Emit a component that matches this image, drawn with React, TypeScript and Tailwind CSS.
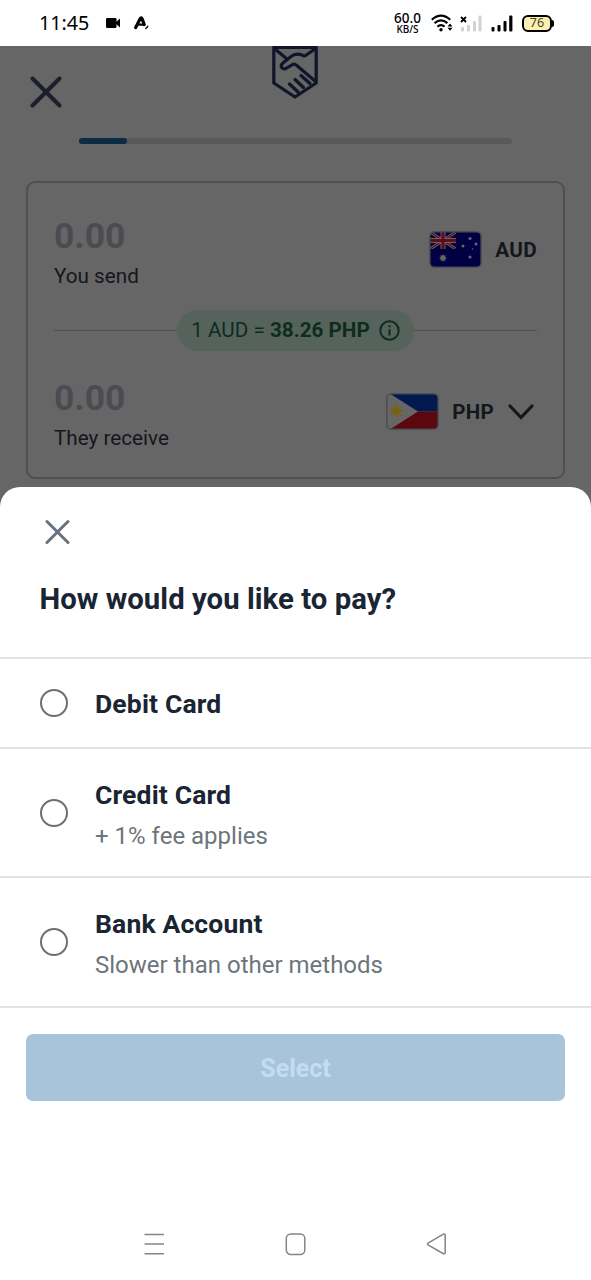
import { useState } from "react";

const PAYMENT_METHODS = [
  { id: "debit", title: "Debit Card", note: "", height: "h-[90px]" },
  { id: "credit", title: "Credit Card", note: "+ 1% fee applies", height: "h-[129px]" },
  { id: "bank", title: "Bank Account", note: "Slower than other methods", height: "h-[130px]" },
];

function StatusBar() {
  return (
    <header className="flex h-[46px] items-center justify-between bg-white pl-[39px] pr-[37px] font-['Noto_Sans',sans-serif] text-black">
      <div className="flex items-center">
        <span className="w-[67px] text-[19.7px] leading-none">11:45</span>
        <svg width="14" height="10" viewBox="0 0 14 10" fill="currentColor">
          <rect width="10.5" height="10" rx="1.2" />
          <path d="M9.5 4.5 14 .6v8.800L9.500 5.500z" />
        </svg>
        <svg className="ml-[14px]" width="15" height="14" viewBox="0 0 15 14" fill="none" stroke="currentColor">
          <path d="M1.700 11.500 6 3Q7.200 .8 8.200 3L10.200 8.600" strokeWidth="3.200" strokeLinecap="round" />
          <path d="M3.500 8.600h6.500" strokeWidth="2.200" />
          <path d="M11.300 12.800q1.900-.8 2.700-3" strokeWidth="1.300" />
        </svg>
      </div>

      <div className="flex items-center">
        <div className="flex w-[29px] flex-col items-center font-medium">
          <span className="h-[12px] text-[13.5px] leading-[12px]">60.0</span>
          <span className="h-[10px] text-[10px] leading-[10px]">KB/S</span>
        </div>
        <svg className="ml-[9px]" width="23" height="18" viewBox="0 0 23 18" fill="none" stroke="currentColor" strokeWidth="2.2">
          <path d="M.8 5.700q9.200-8.200 18.400 0M3.600 9.200q6.400-5.600 12.800 0M6.400 12.600q3.600-3 7.200 0" />
          <circle cx="10" cy="15.700" r="1.700" fill="currentColor" stroke="none" />
          <path d="m16.500 12.400 2.500-3 2.500 3zM16.500 13.800l2.500 3 2.500-3z" fill="currentColor" stroke="none" />
        </svg>
        <svg className="ml-[6px]" width="22" height="17" viewBox="0 0 22 17">
          <path d="m1 2 5 5m0-5L1 7" stroke="currentColor" strokeWidth="1.800" />
          <g fill="#d2d2d2">
            <rect x="1" y="12" width="3" height="4.500" rx="1" />
            <rect x="7" y="10" width="3" height="6.500" rx="1" />
            <rect x="13" y="6" width="3" height="10.500" rx="1" />
            <rect x="18.500" y="0.500" width="3" height="16" rx="1" />
          </g>
        </svg>
        <svg className="ml-[9px]" width="22" height="17" viewBox="0 0 22 17" fill="currentColor">
          <rect x="0.500" y="12" width="3" height="4.500" rx="1" />
          <rect x="6.500" y="10" width="3" height="6.500" rx="1" />
          <rect x="12.500" y="6" width="3" height="10.500" rx="1" />
          <rect x="18.200" y="0.500" width="3.200" height="16" rx="1" />
        </svg>
        <div className="ml-[9px] flex h-[17px] w-[30px] items-center justify-center rounded-[6px] border-2 border-black bg-[#fbf0b4] text-[12.5px] leading-none text-[#4d4214]">
          76
        </div>
        <span className="h-[7px] w-[2px] rounded-r bg-black" />
      </div>
    </header>
  );
}

function ShieldLogo() {
  return (
    <svg className="-ml-px" width="46" height="54" viewBox="0 0 46 54" fill="none" stroke="#10152a" strokeWidth="3.200" strokeLinejoin="round" strokeLinecap="round">
      <path d="M1.800 1.500h42.400v35.500L23 51 1.800 37z" />
      <path d="m3 3 12.500 10.500M43 3 33.500 9.500Q32 10.500 30 9q-6-2.500-11 1.500l-8 6.500q-2.800 2.300-1.200 4.700 1.800 2 4.700.5l6-3.500q2.200-1.200 4 .6L43 35" />
      <path d="m29 29.500 9 8M23 33.500l8.500 8M17.500 38l8.500 8" />
    </svg>
  );
}

function AustraliaFlag() {
  return (
    <svg width="53" height="37" viewBox="0 0 53 37">
      <clipPath id="au">
        <rect x="1" y="1" width="51" height="35" rx="4" />
      </clipPath>
      <clipPath id="jack">
        <rect x="1" y="1" width="26" height="17" />
      </clipPath>
      <g clipPath="url(#au)">
        <rect width="53" height="37" fill="#000042" />
        <g clipPath="url(#jack)">
          <path d="m1 1 26 17M27 1 1 18" stroke="#666" strokeWidth="3" />
          <path d="m1 1 26 17M27 1 1 18" stroke="#620b16" strokeWidth="1.200" />
          <path d="M14 0v19M0 9.500h28" stroke="#666" strokeWidth="5" />
          <path d="M14 0v19M0 9.500h28" stroke="#620b16" strokeWidth="3.200" />
        </g>
        <g fill="#666">
          <circle cx="14" cy="27" r="2.700" />
          <path d="M14 23.500v7M10.500 27h7M11.500 24.500l5 5M16.500 24.500l-5 5" stroke="#666" />
          <circle cx="41" cy="7.500" r="1.500" />
          <circle cx="34" cy="15" r="1.500" />
          <circle cx="47" cy="13" r="1.500" />
          <circle cx="41" cy="26" r="1.600" />
          <circle cx="43.500" cy="18" r="0.800" />
        </g>
      </g>
      <rect x="0.800" y="0.800" width="51.400" height="35.400" rx="4.500" fill="none" stroke="#4c4f56" strokeWidth="1.600" />
    </svg>
  );
}

function PhilippinesFlag() {
  return (
    <svg width="53" height="37" viewBox="0 0 53 37">
      <clipPath id="ph">
        <rect x="1" y="1" width="51" height="35" rx="4" />
      </clipPath>
      <g clipPath="url(#ph)">
        <rect width="53" height="18.500" fill="#001a4f" />
        <rect y="18.500" width="53" height="19" fill="#5a0710" />
        <path d="M0 0h3l29 18.500L3 37H0z" fill="#666" />
        <path d="M10.500 11v14M3.500 18h14M5.500 13l10 10M15.500 13l-10 10" stroke="#766216" strokeWidth="1.700" />
        <circle cx="10.500" cy="18" r="3.600" fill="#766216" />
      </g>
      <rect x="0.800" y="0.800" width="51.400" height="35.400" rx="4.500" fill="none" stroke="#4c4f56" strokeWidth="1.600" />
    </svg>
  );
}

function Amount({ label }: { label: string }) {
  return (
    <div>
      <div className="text-[35.5px] font-bold leading-[42px] text-[#4a4c51]">0.00</div>
      <div className="mt-[7px] text-[20.7px] leading-[25px] text-[#14171c]">{label}</div>
    </div>
  );
}

function TransferScreen() {
  return (
    <main className="h-[441px] bg-[#666]">
      <div className="grid h-[95px] grid-cols-[1fr_46px_1fr] items-start">
        <button className="ml-[30px] mt-[30px] w-8" aria-label="Close">
          <svg width="32" height="32" viewBox="0 0 32 32" stroke="#1b1f2b" strokeWidth="4" strokeLinecap="round">
            <path d="m2.500 2.500 27 27M29.500 2.500l-27 27" />
          </svg>
        </button>
        <ShieldLogo />
      </div>
      <div className="-mt-[3px] ml-[79px] h-[6px] w-[433px] rounded-full bg-[#595959]">
        <div className="h-full w-[48px] rounded-full bg-[#0c2c45]" />
      </div>

      <section className="mx-[26px] mt-[37px] h-[298px] rounded-[9px] border-2 border-[#4d4f52] px-[26px] pt-[32px]">
        <div className="flex items-start justify-between">
          <Amount label="You send" />
          <div className="mt-[16px] flex items-center">
            <AustraliaFlag />
            <span className="ml-[13px] text-[20.7px] font-bold leading-6 tracking-[0.3px] text-[#14171c]">AUD</span>
          </div>
        </div>

        <div className="mt-[21px] flex items-center">
          <span className="h-[1.5px] flex-1 bg-[#4d4f52]" />
          <div className="flex h-[41px] w-[237px] items-center justify-center rounded-full bg-[#55635c] text-[20.7px] text-[#0d2c1e]">
            <span className="whitespace-nowrap pt-px">
              1 AUD = <b className="font-bold">38.26 PHP</b>
            </span>
            <svg className="ml-[9px]" width="21" height="21" viewBox="0 0 21 21" fill="none" stroke="currentColor" strokeWidth="2">
              <circle cx="10.500" cy="10.500" r="9.200" />
              <path d="M10.500 9.300v6.200M10.500 5.200v2" />
            </svg>
          </div>
          <span className="h-[1.5px] flex-1 bg-[#4d4f52]" />
        </div>

        <div className="mt-[26px] flex items-start justify-between">
          <Amount label="They receive" />
          <div className="mt-[16px] flex items-center">
            <PhilippinesFlag />
            <span className="ml-[13px] text-[20.5px] font-bold leading-6 tracking-[0.3px] text-[#14171c]">PHP</span>
            <svg className="ml-[14px] mr-[3px]" width="26" height="16" viewBox="0 0 26 16" fill="none" stroke="#14171c" strokeWidth="3.200" strokeLinecap="round">
              <path d="m2 2 11 11.500L24 2" />
            </svg>
          </div>
        </div>
      </section>
    </main>
  );
}

function PaymentSheet() {
  const [selected, setSelected] = useState("");

  return (
    <div className="bg-[#666]">
      <section className="h-[793px] rounded-t-[20px] bg-white">
        <div className="h-[170px] pl-[39.5px] pt-[32px]">
          <button className="block pl-[5px]" aria-label="Close payment options">
            <svg width="25" height="26" viewBox="0 0 25 26" stroke="#66727e" strokeWidth="3" strokeLinecap="round">
              <path d="m2 2.500 21 21M23 2.500l-21 21" />
            </svg>
          </button>
          <h1 className="mt-[36px] text-[29.3px] font-bold leading-[36px] tracking-[0.05px] text-[#1a2533]">How would you like to pay?</h1>
        </div>

        <div>
          {PAYMENT_METHODS.map((method) => (
            <button
              key={method.id}
              onClick={() => setSelected(method.id)}
              className={`flex w-full items-center border-t-2 border-[#e2e3e4] pl-[40px] text-left ${method.height}`}
            >
              <span className="flex h-[28px] w-[28px] items-center justify-center rounded-full border-2 border-[#6b7075]">
                {selected === method.id && <span className="h-4 w-4 rounded-full bg-[#1c6ea4]" />}
              </span>
              <span className="ml-[27px] flex flex-col pt-[2px]">
                <span className="text-[26.5px] font-bold leading-[32px] tracking-[0.15px] text-[#1a2533]">{method.title}</span>
                {method.note && <span className="mt-[9px] -mb-[3px] text-[24px] leading-[32px] text-[#6d757c]">{method.note}</span>}
              </span>
            </button>
          ))}
        </div>

        <div className="border-t-2 border-[#e2e3e4] px-[26px] pt-[26px]">
          <button className="h-[67px] w-full rounded-[7px] bg-[#a8c4db] pt-[2px] text-[25px] font-bold text-[#c3dcf1]">Select</button>
        </div>

        <nav className="mt-[131px] flex items-center pl-[143px]">
          <svg width="22" height="24" viewBox="0 0 22 24" stroke="#858585" strokeWidth="1.500">
            <path d="M1.500 2.500h19.500M1.500 12h19.500M1.500 21.800h19.500" />
          </svg>
          <svg className="ml-[120px]" width="22" height="24" viewBox="0 0 22 24" fill="none" stroke="#858585" strokeWidth="1.500">
            <rect x="1.300" y="2" width="18.500" height="20.500" rx="4.500" />
          </svg>
          <svg className="ml-[119px]" width="22" height="24" viewBox="0 0 22 24" fill="none" stroke="#858585" strokeWidth="1.500" strokeLinejoin="round">
            <path d="M2 11.200 17 2.300q2.200-.7 2.200 1.200v17q0 1.900-2.200 1L2 12.800q-1.200-.8 0-1.600z" />
          </svg>
        </nav>
      </section>
    </div>
  );
}

export default function App() {
  return (
    <div className="h-[1280px] w-[591px] overflow-hidden bg-white font-['Roboto',sans-serif]">
      <StatusBar />
      <TransferScreen />
      <PaymentSheet />
    </div>
  );
}
